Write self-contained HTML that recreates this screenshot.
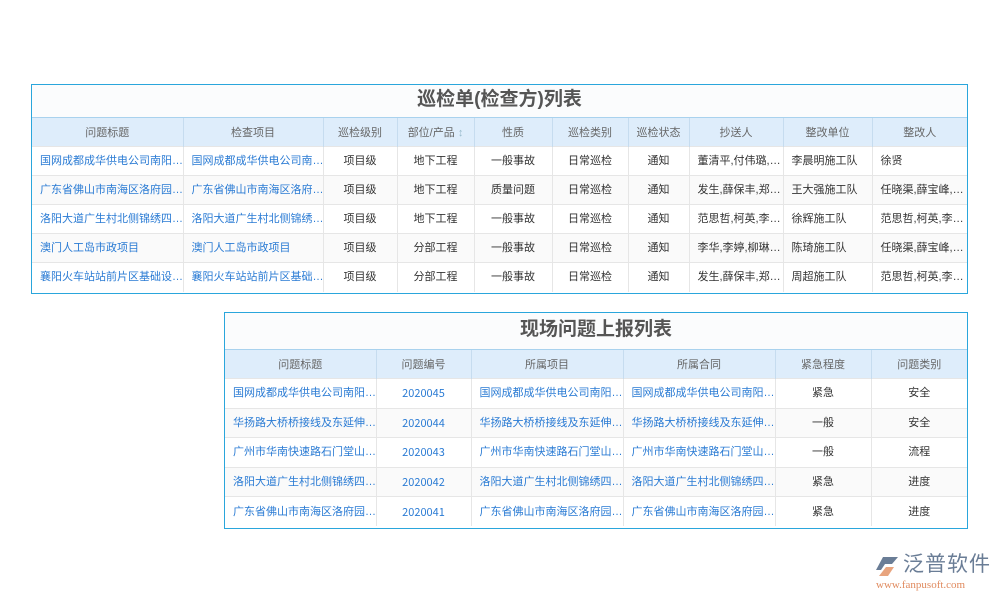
<!DOCTYPE html>
<html><head><meta charset="utf-8"><style>
body{margin:0;width:1000px;height:600px;background:#fff;position:relative;font-family:"Liberation Sans","Noto Sans CJK SC",sans-serif;overflow:hidden}
.box{position:absolute;border:1px solid #2aa6dc;background:#fff;box-sizing:border-box}
.ttl{text-align:center;font-weight:bold;color:#555;font-size:19px;background:#fbfcfd}
table{border-collapse:collapse;table-layout:fixed;width:100%}
th{background:#deedfb;color:#666;font-weight:normal;font-size:11px;border-left:1px solid #c6dcef;border-top:1px solid #a9d2ee;height:28px;padding:0}
td{font-size:11px;color:#333;text-align:center;border-left:1px solid #e6e6e6;border-top:1px solid #e6e6e6;white-space:nowrap;overflow:hidden;padding:0 8px;vertical-align:middle;line-height:14px}
tr:nth-child(odd) td{background:#fafafa}
td.l{text-align:left;color:#2a7bd4}
td.n{color:#2a7bd4;font-family:"Noto Sans CJK SC",sans-serif}
td.p{text-align:left}
th:first-child,td:first-child{border-left:none}
</style></head><body>
<div class="box" style="left:31px;top:84px;width:937px;height:210px">
<div class="ttl" style="height:32px;line-height:30px">巡检单(检查方)列表</div>
<table>
<colgroup><col style="width:151px"><col style="width:140px"><col style="width:74px"><col style="width:77px"><col style="width:78px"><col style="width:76px"><col style="width:61px"><col style="width:94px"><col style="width:89px"><col></colgroup>
<tr><th>问题标题</th><th>检查项目</th><th>巡检级别</th><th>部位/产品 <span style="color:#9bc">↕</span></th><th>性质</th><th>巡检类别</th><th>巡检状态</th><th>抄送人</th><th>整改单位</th><th>整改人</th></tr>
<tr style="height:29px"><td class="l">国网成都成华供电公司南阳…</td><td class="l">国网成都成华供电公司南…</td><td>项目级</td><td>地下工程</td><td>一般事故</td><td>日常巡检</td><td>通知</td><td class="p">董清平,付伟璐,…</td><td class="p">李晨明施工队</td><td class="p">徐贤</td></tr>
<tr style="height:29px"><td class="l">广东省佛山市南海区洛府园…</td><td class="l">广东省佛山市南海区洛府…</td><td>项目级</td><td>地下工程</td><td>质量问题</td><td>日常巡检</td><td>通知</td><td class="p">发生,薛保丰,郑…</td><td class="p">王大强施工队</td><td class="p">任晓渠,薛宝峰,…</td></tr>
<tr style="height:29px"><td class="l">洛阳大道广生村北侧锦绣四…</td><td class="l">洛阳大道广生村北侧锦绣…</td><td>项目级</td><td>地下工程</td><td>一般事故</td><td>日常巡检</td><td>通知</td><td class="p">范思哲,柯英,李…</td><td class="p">徐辉施工队</td><td class="p">范思哲,柯英,李…</td></tr>
<tr style="height:29px"><td class="l">澳门人工岛市政项目</td><td class="l">澳门人工岛市政项目</td><td>项目级</td><td>分部工程</td><td>一般事故</td><td>日常巡检</td><td>通知</td><td class="p">李华,李婷,柳琳…</td><td class="p">陈琦施工队</td><td class="p">任晓渠,薛宝峰,…</td></tr>
<tr style="height:29px"><td class="l">襄阳火车站站前片区基础设…</td><td class="l">襄阳火车站站前片区基础…</td><td>项目级</td><td>分部工程</td><td>一般事故</td><td>日常巡检</td><td>通知</td><td class="p">发生,薛保丰,郑…</td><td class="p">周超施工队</td><td class="p">范思哲,柯英,李…</td></tr>
</table></div>

<div class="box" style="left:224px;top:312px;width:744px;height:217px">
<div class="ttl" style="height:36px;line-height:34px">现场问题上报列表</div>
<table>
<colgroup><col style="width:151px"><col style="width:95px"><col style="width:152px"><col style="width:152px"><col style="width:96px"><col></colgroup>
<tr><th>问题标题</th><th>问题编号</th><th>所属项目</th><th>所属合同</th><th>紧急程度</th><th>问题类别</th></tr>
<tr style="height:29.6px"><td class="l">国网成都成华供电公司南阳…</td><td class="n">2020045</td><td class="l">国网成都成华供电公司南阳…</td><td class="l">国网成都成华供电公司南阳…</td><td>紧急</td><td>安全</td></tr>
<tr style="height:29.6px"><td class="l">华扬路大桥桥接线及东延伸…</td><td class="n">2020044</td><td class="l">华扬路大桥桥接线及东延伸…</td><td class="l">华扬路大桥桥接线及东延伸…</td><td>一般</td><td>安全</td></tr>
<tr style="height:29.6px"><td class="l">广州市华南快速路石门堂山…</td><td class="n">2020043</td><td class="l">广州市华南快速路石门堂山…</td><td class="l">广州市华南快速路石门堂山…</td><td>一般</td><td>流程</td></tr>
<tr style="height:29.6px"><td class="l">洛阳大道广生村北侧锦绣四…</td><td class="n">2020042</td><td class="l">洛阳大道广生村北侧锦绣四…</td><td class="l">洛阳大道广生村北侧锦绣四…</td><td>紧急</td><td>进度</td></tr>
<tr style="height:29.6px"><td class="l">广东省佛山市南海区洛府园…</td><td class="n">2020041</td><td class="l">广东省佛山市南海区洛府园…</td><td class="l">广东省佛山市南海区洛府园…</td><td>紧急</td><td>进度</td></tr>
</table></div>

<svg style="position:absolute;left:874px;top:556px" width="26" height="22" viewBox="0 0 26 22"><path d="M9 1 L24 1 L18 8 L11 8 L7 14 L2 14 Z" fill="#6a7d96"/><path d="M12 11 L20 11 L14 20 L5 20 Z" fill="#e8a47e"/></svg>
<div style="position:absolute;left:903px;top:552px;font-size:21px;color:#6a7d96;letter-spacing:1px;line-height:26px">泛普软件</div>
<div style="position:absolute;left:876px;top:579px;font-size:11px;color:#e08a5e;font-family:'Liberation Serif',serif;line-height:12px">www.fanpusoft.com</div>
</body></html>
